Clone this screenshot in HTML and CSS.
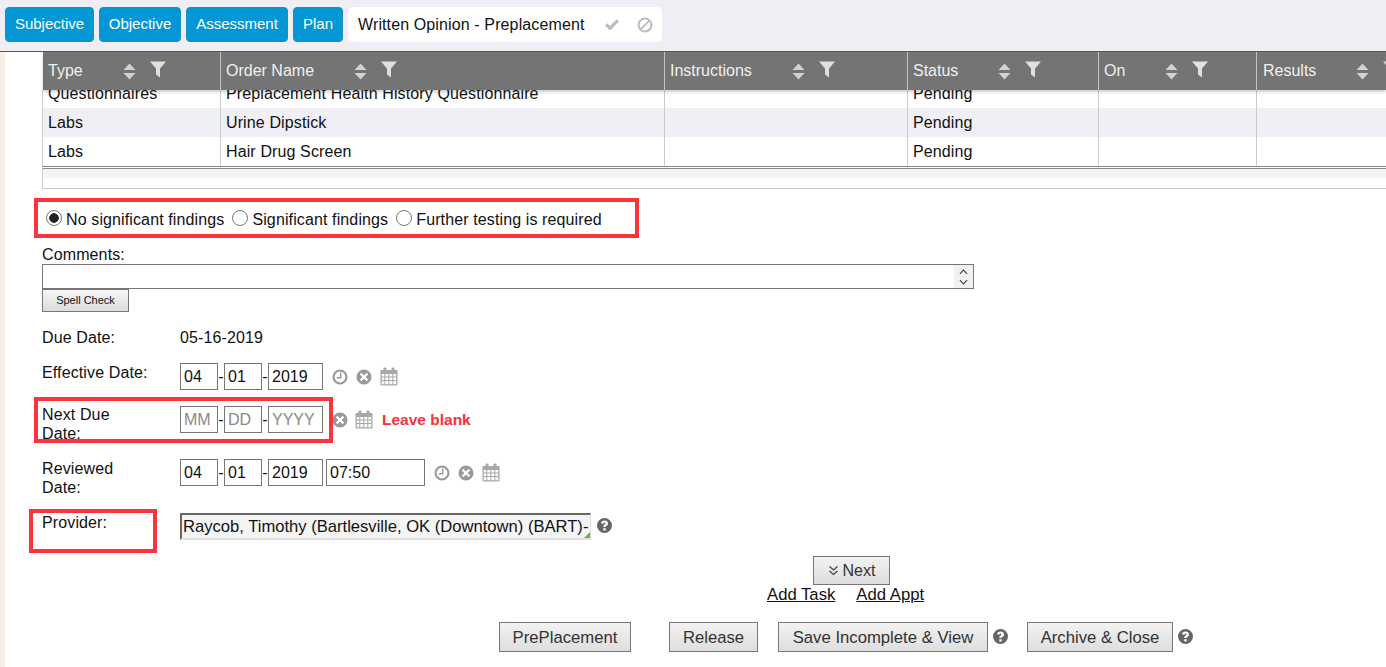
FILE: index.html
```html
<!DOCTYPE html>
<html lang="en">
<head>
<meta charset="utf-8">
<title>Written Opinion - Preplacement</title>
<link rel="stylesheet" href="styles.css">
</head>
<body>
<svg class="defs" aria-hidden="true">
  <symbol id="i-sort" viewBox="0 0 13 17"><path d="M6.5 0.5 12.5 7H0.5ZM0.5 10H12.5L6.5 16.5Z"/></symbol>
  <symbol id="i-filter" viewBox="0 0 16 17"><path d="M0 0.5H16L10 7.5V16.5L6 13.5V7.5Z"/></symbol>
  <symbol id="i-clock" viewBox="0 0 16 16"><path fill-rule="evenodd" d="M8 0.5a7.5 7.5 0 1 0 0 15a7.5 7.5 0 0 0 0-15ZM8 2.6a5.4 5.4 0 1 1 0 10.8a5.4 5.4 0 0 1 0-10.8Z"/><path d="M8 3.6H9.4V9.4H4.6V8H8Z"/></symbol>
  <symbol id="i-x" viewBox="0 0 16 16"><path fill-rule="evenodd" d="M8 0.5a7.5 7.5 0 1 0 0 15a7.5 7.5 0 0 0 0-15ZM5.4 3.8 8 6.4 10.6 3.8 12.2 5.4 9.6 8 12.2 10.6 10.6 12.2 8 9.6 5.4 12.2 3.8 10.6 6.4 8 3.8 5.4Z"/></symbol>
  <symbol id="i-cal" viewBox="0 0 18 19"><path fill-rule="evenodd" d="M1.5 3H3.5V1.5a1 1 0 0 1 1-1h1a1 1 0 0 1 1 1V3H11.5V1.5a1 1 0 0 1 1-1h1a1 1 0 0 1 1 1V3H16.500a1 1 0 0 1 1 1V17.500a1 1 0 0 1-1 1H1.5a1 1 0 0 1-1-1V4a1 1 0 0 1 1-1ZM1.800 7V9.400H4.300V7ZM5.300 7V9.400H8.300V7ZM9.300 7V9.400H12.300V7ZM13.300 7V9.400H16.200V7ZM1.800 10.400V13H4.300V10.400ZM5.300 10.400V13H8.300V10.400ZM9.300 10.400V13H12.300V10.400ZM13.300 10.400V13H16.200V10.400ZM1.800 14V17.200H4.300V14ZM5.300 14V17.200H8.300V14ZM9.300 14V17.200H12.300V14ZM13.300 14V17.200H16.200V14Z"/></symbol>
  <symbol id="i-help" viewBox="0 0 15 15"><path fill-rule="evenodd" d="M7.500 0a7.500 7.500 0 1 0 0 15a7.500 7.500 0 0 0 0-15ZM6.300 10.200H8.700V12.400H6.300ZM7.600 2.600c2 0 3.400 1.100 3.400 2.800 0 1.300-.7 1.900-1.500 2.400-.6.400-.8.600-.8 1.300H6.300c0-1.300.3-1.900 1.200-2.500.7-.5 1-.7 1-1.200 0-.5-.4-.8-1-.8-.7 0-1.100.4-1.200 1.100L4 5.300C4.200 3.600 5.600 2.600 7.600 2.600Z"/></symbol>
  <symbol id="i-check" viewBox="0 0 16 14"><path d="M1 7.500 3.200 5.300 6 8.100 12.800 1.300 15 3.500 6 12.500Z"/></symbol>
  <symbol id="i-ban" viewBox="0 0 16 16"><path fill-rule="evenodd" d="M8 0.500a7.500 7.500 0 1 0 0 15a7.500 7.500 0 0 0 0-15ZM8 2.500c1.200 0 2.300.4 3.200 1.100L3.600 11.200A5.500 5.500 0 0 1 8 2.500ZM12.400 4.800A5.500 5.500 0 0 1 4.800 12.400Z"/></symbol>
  <symbol id="i-dbl" viewBox="0 0 11 11"><path d="M1.500 1.500 5.500 5 9.500 1.500M1.500 6 5.500 9.500 9.500 6" fill="none" stroke="currentColor" stroke-width="1.300"/></symbol>
</svg>

<header class="topbar">
  <button class="tab t-sub">Subjective</button>
  <button class="tab t-obj">Objective</button>
  <button class="tab t-ass">Assessment</button>
  <button class="tab t-plan">Plan</button>
  <div class="tab-title">
    <span class="tab-title-text">Written Opinion - Preplacement</span>
    <svg class="ic-check"><use href="#i-check"/></svg>
    <svg class="ic-ban"><use href="#i-ban"/></svg>
  </div>
</header>

<div class="page">
  <div class="strip"></div>
  <main class="main">
    <div class="grid-wrap">
      <div class="row head">
        <div class="cell"><span class="lbl l-type">Type</span><svg class="ic-sort"><use href="#i-sort"/></svg><svg class="ic-filter"><use href="#i-filter"/></svg></div>
        <div class="cell"><span class="lbl l-name">Order Name</span><svg class="ic-sort"><use href="#i-sort"/></svg><svg class="ic-filter"><use href="#i-filter"/></svg></div>
        <div class="cell"><span class="lbl l-inst">Instructions</span><svg class="ic-sort"><use href="#i-sort"/></svg><svg class="ic-filter"><use href="#i-filter"/></svg></div>
        <div class="cell"><span class="lbl l-stat">Status</span><svg class="ic-sort"><use href="#i-sort"/></svg><svg class="ic-filter"><use href="#i-filter"/></svg></div>
        <div class="cell"><span class="lbl l-on">On</span><svg class="ic-sort"><use href="#i-sort"/></svg><svg class="ic-filter"><use href="#i-filter"/></svg></div>
        <div class="cell c-res"><span class="lbl l-res">Results</span><svg class="ic-sort"><use href="#i-sort"/></svg><svg class="ic-filter"><use href="#i-filter"/></svg></div>
      </div>
      <div class="body-clip">
        <div class="body-scroll">
          <div class="row rec"><div class="cell">Questionnaires</div><div class="cell">Preplacement Health History Questionnaire</div><div class="cell"></div><div class="cell">Pending</div><div class="cell"></div><div class="cell"></div></div>
          <div class="row rec alt"><div class="cell">Labs</div><div class="cell">Urine Dipstick</div><div class="cell"></div><div class="cell">Pending</div><div class="cell"></div><div class="cell"></div></div>
          <div class="row rec"><div class="cell">Labs</div><div class="cell">Hair Drug Screen</div><div class="cell"></div><div class="cell">Pending</div><div class="cell"></div><div class="cell"></div></div>
        </div>
      </div>
      <div class="hscroll"></div>
    </div>

    <div class="radios">
      <label class="radio"><input type="radio" name="finding" checked>No significant findings</label>
      <label class="radio"><input type="radio" name="finding">Significant findings</label>
      <label class="radio"><input type="radio" name="finding">Further testing is required</label>
    </div>

    <div class="comments-label">Comments:</div>
    <div class="comments">
      <div class="comments-text"></div>
      <div class="comments-bar">
        <svg class="chev" viewBox="0 0 10 6"><path d="M1 5 5 1 9 5"/></svg>
        <svg class="chev" viewBox="0 0 10 6"><path d="M1 1 5 5 9 1"/></svg>
      </div>
    </div>
    <button class="spell">Spell Check</button>

    <div class="due"><span class="flabel">Due Date:</span><span>05-16-2019</span></div>

    <div class="frow effective">
      <span class="flabel">Effective Date:</span>
      <input class="in in-m" value="04"><span class="dash">-</span><input class="in in-m" value="01"><span class="dash">-</span><input class="in in-y" value="2019">
      <svg class="ic ic-first"><use href="#i-clock"/></svg><svg class="ic"><use href="#i-x"/></svg><svg class="ic-cal"><use href="#i-cal"/></svg>
    </div>

    <div class="frow nextdue">
      <span class="flabel two">Next Due Date:</span>
      <input class="in in-m" placeholder="MM"><span class="dash">-</span><input class="in in-m" placeholder="DD"><span class="dash">-</span><input class="in in-y" placeholder="YYYY">
      <svg class="ic ic-tight"><use href="#i-x"/></svg><svg class="ic-cal ic-cal-near"><use href="#i-cal"/></svg>
      <span class="leave">Leave blank</span>
    </div>

    <div class="frow reviewed">
      <span class="flabel two">Reviewed Date:</span>
      <input class="in in-m" value="04"><span class="dash">-</span><input class="in in-m" value="01"><span class="dash">-</span><input class="in in-y" value="2019"><input class="in in-t" value="07:50">
      <svg class="ic ic-first"><use href="#i-clock"/></svg><svg class="ic"><use href="#i-x"/></svg><svg class="ic-cal"><use href="#i-cal"/></svg>
    </div>

    <div class="frow provider">
      <span class="flabel">Provider:</span>
      <div class="select">Raycob, Timothy (Bartlesville, OK (Downtown) (BART)-<i class="corner"></i></div>
      <svg class="ic-help"><use href="#i-help"/></svg>
    </div>

    <div class="next-wrap"><button class="btn btn-next"><svg class="ic-dbl"><use href="#i-dbl"/></svg>Next</button></div>
    <div class="links"><a href="#">Add Task</a><a href="#">Add Appt</a></div>

    <div class="actions">
      <button class="btn btn-pre">PrePlacement</button>
      <button class="btn btn-rel">Release</button>
      <button class="btn btn-save">Save Incomplete &amp; View</button>
      <svg class="ic-help"><use href="#i-help"/></svg>
      <button class="btn btn-arch">Archive &amp; Close</button>
      <svg class="ic-help"><use href="#i-help"/></svg>
    </div>
  </main>
</div>

<div class="redbox rb-1"></div>
<div class="redbox rb-2"></div>
<div class="redbox rb-3"></div>
</body>
</html>
```
FILE: styles.css
```css
* { box-sizing: border-box; }
html, body { margin: 0; height: 667px; overflow: hidden; }
body { position: relative; background: #fff; color: #111; font: 16px/18px "Liberation Sans", Arial, sans-serif; letter-spacing: .12px; }
.defs { position: absolute; width: 0; height: 0; }
button, input { font: inherit; color: inherit; }

.topbar { display: flex; gap: 5px; height: 52px; padding: 7px 5px 0; background: #efeef4; border-bottom: 1px solid #555; }
.tab { height: 35px; padding: 0 0 2px; font-size: 15px; letter-spacing: 0; background: #0397d6; color: #fff; border: 1px solid #1b8fc4; border-radius: 4px; }
.t-sub { width: 89px; }
.t-obj { width: 82px; }
.t-ass { width: 102px; }
.t-plan { width: 50px; }
.tab-title { display: flex; align-items: center; height: 35px; width: 314px; padding-left: 10px; background: #fff; border-radius: 5px; }
.tab-title-text { width: 246px; white-space: nowrap; }
.ic-check { width: 16px; height: 14px; fill: #bdbdbd; flex: none; }
.ic-ban { width: 16px; height: 16px; margin-left: 17px; fill: #bdbdbd; flex: none; }

.page { display: flex; height: 615px; }
.strip { width: 5px; background: #f6f0e2; }
.main { flex: 1; padding-left: 37px; min-width: 0; }

.grid-wrap { width: 1344px; margin-right: -10px; }
.row { display: grid; grid-template-columns: 178px 444px 243px 191px 158px 130px; }
.head { position: relative; z-index: 1; height: 38px; margin-left: 1px; background: #747474; color: #f0f0f0; box-shadow: 0 2px 3px rgba(0,0,0,.2); letter-spacing: 0; }
.head .cell { display: flex; align-items: center; padding-left: 5px; border-right: 1px solid #c4c4c4; }
.head .c-res { padding-left: 6px; border-right: 0; }
.lbl { display: block; flex: none; }
.l-type { width: 75px; }
.l-name { width: 128px; }
.l-inst { width: 122px; }
.l-stat { width: 85px; }
.l-on { width: 61px; }
.l-res { width: 93px; }
.ic-sort { width: 13px; height: 17px; fill: #d2d2d2; flex: none; }
.ic-filter { width: 16px; height: 17px; margin-left: 14px; margin-top: -3px; fill: #e0e0e0; flex: none; }

.body-clip { height: 76px; overflow: hidden; border-left: 1px solid #ccc; }
.body-scroll { margin-top: -11px; }
.rec { height: 29px; }
.rec .cell { padding-left: 5px; line-height: 29px; border-right: 1px solid #ccc; white-space: nowrap; }
.alt { background: #f0eff5; }
.hscroll { height: 23px; border: 1px solid #ccc; border-top: 3px double #888; border-right: 0; background: linear-gradient(#f4f4f8 0 9px, #fff 9px); }

.radios { display: flex; margin-top: 21px; margin-left: 4px; height: 20px; align-items: center; }
.radio { display: flex; align-items: center; margin-right: 8px; white-space: nowrap; }
.radio input { appearance: none; width: 16px; height: 16px; margin: -4px 4px 0 0; background: #fff; border: 1px solid #777; border-radius: 50%; flex: none; }
.radio input:checked { background: radial-gradient(circle, #222 0 4.500px, #fff 5px); }

.comments-label { margin-top: 16px; line-height: 18px; }
.comments { display: flex; width: 932px; height: 25px; border: 1px solid #777; }
.comments-text { flex: 1; background: #fff; }
.comments-bar { display: flex; flex-direction: column; align-items: center; justify-content: center; gap: 4px; width: 19px; background: #f1f1f1; }
.chev { width: 9px; height: 6px; fill: none; stroke: #444; stroke-width: 1.300; }
.spell { display: block; width: 87px; height: 23px; padding: 0 0 2px; font-size: 11px; letter-spacing: 0; background: linear-gradient(#f6f6f6, #dcdcdc); border: 1px solid #777; }

.due { display: flex; margin-top: 17px; line-height: 18px; }
.flabel { display: block; width: 138px; flex: none; }
.frow { display: flex; align-items: center; }
.effective { margin-top: 16px; height: 27px; }
.effective .flabel { margin-top: -7px; }
.nextdue { margin-top: 16px; height: 27px; }
.reviewed { margin-top: 26px; height: 27px; }
.two { width: 100px; margin-right: 38px; line-height: 19px; margin-top: 9px; }
.reviewed .two { margin-top: 11px; }
.in { height: 27px; padding: 0 3px; border: 1px solid #777; background: #fff; outline: 0; letter-spacing: 0; }
.in::placeholder { color: #888; opacity: 1; }
.in-m { width: 38px; }
.in-y { width: 55px; }
.in-t { width: 99px; margin-left: 3px; }
.dash { width: 6px; text-align: center; overflow: hidden; }
.ic { width: 16px; height: 16px; margin-left: 8px; fill: #999; flex: none; }
.ic-first { margin-left: 9px; }
.ic-tight { margin-left: 9px; }
.ic-cal { width: 18px; height: 19px; margin-left: 8px; fill: #a8a8a8; flex: none; }
.ic-cal-near { margin-left: 7px; }
.leave { margin-left: 9px; color: #f8323a; font-weight: 700; font-size: 15.500px; letter-spacing: 0; }

.provider { margin-top: 27px; height: 27px; align-items: flex-start; }
.provider .flabel { margin-top: 1px; }
.select { position: relative; width: 411px; height: 27px; padding-left: 1px; overflow: hidden; font-size: 16.600px; letter-spacing: 0; line-height: 23px; white-space: nowrap; background: #f4f4f4; border-style: solid; border-color: #666 #e0e0e0 #e0e0e0 #666; border-width: 2px 1px 2px 2px; }
.corner { position: absolute; right: 0; bottom: 0; border: 3px solid transparent; border-right-color: #6db33f; border-bottom-color: #6db33f; }
.ic-help { width: 15px; height: 15px; margin-left: 6px; margin-top: 5px; fill: #666; flex: none; }

.next-wrap { margin-top: 16px; padding-left: 771px; }
.btn { height: 30px; padding: 1px 0 0; font-size: 16.700px; letter-spacing: 0; background: linear-gradient(#f2f2f2, #dedede); border: 1px solid #777; color: #333; white-space: nowrap; }
.btn-next { display: flex; align-items: center; justify-content: center; width: 77px; height: 29px; padding: 0; font-size: 16px; }
.ic-dbl { width: 11px; height: 11px; margin-right: 4px; color: #444; }
.links { display: flex; gap: 21px; padding-left: 725px; margin-top: 1px; height: 18px; font-size: 16.700px; letter-spacing: 0; }
.links a { color: #111; text-decoration: underline; }

.actions { display: flex; align-items: flex-start; margin-top: 18px; padding-left: 457px; }
.actions .ic-help { margin-top: 7px; margin-left: 5px; }
.btn-pre { width: 132px; }
.btn-rel { width: 89px; margin-left: 38px; }
.btn-save { width: 210px; margin-left: 20px; }
.btn-arch { width: 146px; margin-left: 19px; }

.redbox { position: absolute; border: 4px solid #fb343c; pointer-events: none; }
.rb-1 { left: 34px; top: 198px; width: 605px; height: 40px; }
.rb-2 { left: 34px; top: 397px; width: 299px; height: 46px; }
.rb-3 { left: 29px; top: 509px; width: 128px; height: 44px; }
```
